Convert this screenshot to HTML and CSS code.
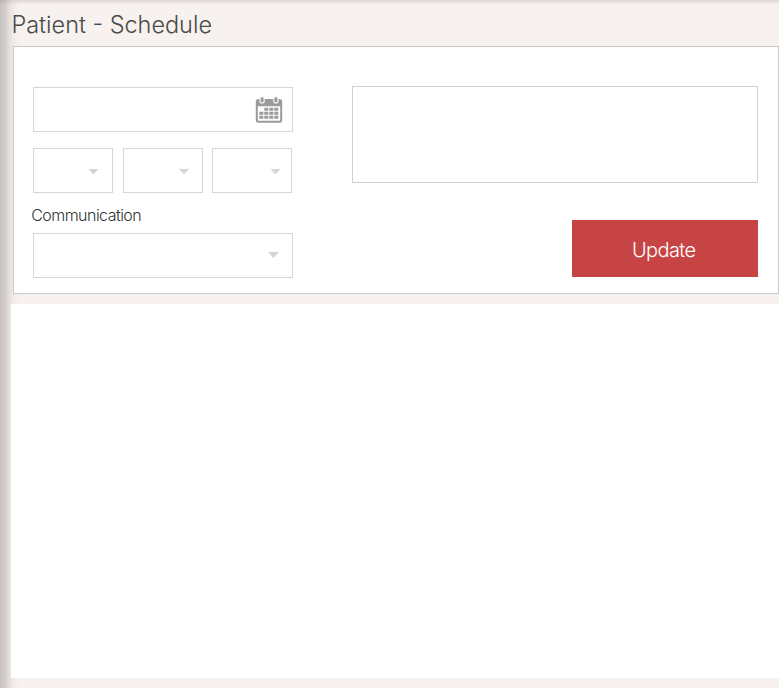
FILE: index.html
```html
<!DOCTYPE html>
<html lang="en">
<head>
<meta charset="utf-8">
<title>Patient - Schedule</title>
<link rel="stylesheet" href="styles.css">
</head>
<body>
<main class="page">
  <h1 class="title"><svg width="202" height="34"><text x="-.5" y="25" textLength="200.500">Patient - Schedule</text></svg></h1>
  <section class="panel">
    <div class="fields">
      <div class="box date">
        <svg width="28" height="28" viewBox="0 0 28 28">
          <path fill="#9b9b9b" fill-rule="evenodd" d="M3 3H25Q27.200 3 27.200 5.500V24.500Q27.200 26.800 25 26.800H3Q.8 26.800 .8 24.500V5.500Q.8 3 3 3ZM2.800 10.200V23.500Q2.800 24.700 4 24.700H24Q25.200 24.700 25.200 23.500V10.200Z"/>
          <g fill="#9b9b9b" stroke="#fff" stroke-width="1.100"><rect x="5" y=".5" width="4.200" height="6.500" rx="2.100"/><rect x="18.800" y=".5" width="4.200" height="6.500" rx="2.100"/></g>
          <path stroke="#9b9b9b" stroke-width="2.900" stroke-dasharray="4 1" d="M9.300 13.300h14M4.300 17.300h19M4.300 21.200h19"/>
        </svg>
      </div>
      <div class="row">
        <div class="box small"><i class="arrow"></i></div>
        <div class="box small second"><i class="arrow"></i></div>
        <div class="box small third"><i class="arrow"></i></div>
      </div>
      <div class="label"><svg width="112" height="24"><text x=".2" y="17" textLength="110.500">Communication</text></svg></div>
      <div class="box select"><i class="arrow"></i></div>
    </div>
    <div class="side">
      <div class="notes"></div>
      <button class="update"><svg width="66" height="30"><text x="0" y="22" textLength="64">Update</text></svg></button>
    </div>
  </section>
  <section class="results"></section>
</main>
</body>
</html>
```
FILE: styles.css
```css
* { box-sizing: border-box; }

body {
  margin: 0;
  font-family: Inter, "Liberation Sans", sans-serif;
  font-weight: 300;
}

.page {
  height: 688px;
  padding-left: 11px;
  overflow: hidden;
  background:
    linear-gradient(180deg, rgba(120, 110, 110, .2), transparent 5px),
    linear-gradient(90deg, #c7c2bf 0, #d3cecb 5px, #e8e2df 10px, #f3eeeb 15px, transparent 20px),
    #f7f2ef;
}

svg { display: block; overflow: visible; }

.title {
  height: 46px;
  margin: 0;
  padding: 8px 0 0 1px;
  font-size: 23.500px;
  font-weight: 300;
}

.title text { fill: #4a4a4a; }

.panel {
  display: flex;
  justify-content: space-between;
  height: 248px;
  margin-left: 2px;
  padding: 39px 20px 0 19px;
  background: #fff;
  border: 1px solid #c9c9c9;
}

.fields { width: 260px; padding-top: 1px; }

.box {
  display: flex;
  align-items: center;
  justify-content: flex-end;
  height: 45px;
  border: 1px solid #d6d6d6;
}

.date { padding-right: 9px; }

.row {
  display: flex;
  justify-content: space-between;
  width: 259px;
  margin-top: 16px;
}

.small { width: 80px; padding-right: 13px; }
.second { padding-right: 12px; }
.third { padding-right: 10px; }

.arrow {
  width: 11px;
  height: 6px;
  margin-top: 2px;
  background: #d5d5d5;
  clip-path: polygon(0 0, 100% 0, 50% 100%);
}

.label {
  height: 40px;
  padding-top: 11px;
  margin-left: -2px;
  font-size: 16px;
}

.label text { fill: #333; }

.select { padding-right: 13px; }

.select .arrow { margin-top: 0; margin-bottom: 1px; }

.side {
  display: flex;
  flex-direction: column;
  align-items: flex-end;
  width: 406px;
}

.notes {
  width: 100%;
  height: 97px;
  border: 1px solid #d2d2d2;
}

.update {
  display: flex;
  align-items: center;
  justify-content: center;
  width: 186px;
  height: 57px;
  margin-top: 37px;
  padding: 2px 0 0;
  border: 0;
  background: #c74444;
  font: 300 20px Inter, "Liberation Sans", sans-serif;
}

.update text { fill: #fff; }

.results {
  height: 374px;
  margin-top: 10px;
  background: #fff;
}
```
